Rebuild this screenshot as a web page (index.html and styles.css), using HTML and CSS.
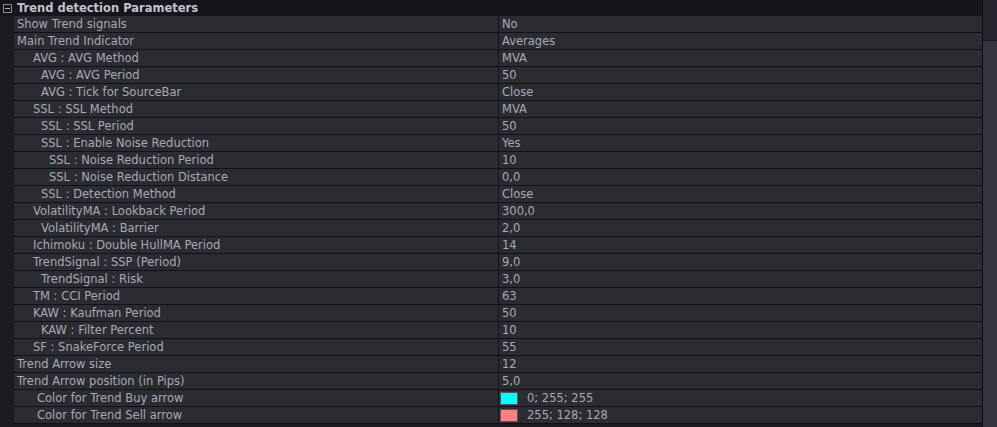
FILE: index.html
```html
<!DOCTYPE html>
<html lang="en">
<head>
  <meta charset="UTF-8">
  <title>Trend detection Parameters</title>
  <link rel="stylesheet" href="styles.css">
</head>
<body>
  <div class="panel">
    <div class="main">
      <div class="header">
        <span class="toggle"></span>
        <span class="title">Trend detection Parameters</span>
      </div>
      <div class="rows">
        <div class="row"><span class="name l0">Show Trend signals</span><span class="value">No</span></div>
        <div class="row"><span class="name l0">Main Trend Indicator</span><span class="value">Averages</span></div>
        <div class="row"><span class="name l1">AVG : AVG Method</span><span class="value">MVA</span></div>
        <div class="row"><span class="name l2">AVG : AVG Period</span><span class="value">50</span></div>
        <div class="row"><span class="name l2">AVG : Tick for SourceBar</span><span class="value">Close</span></div>
        <div class="row"><span class="name l1">SSL : SSL Method</span><span class="value">MVA</span></div>
        <div class="row"><span class="name l2">SSL : SSL Period</span><span class="value">50</span></div>
        <div class="row"><span class="name l2">SSL : Enable Noise Reduction</span><span class="value">Yes</span></div>
        <div class="row"><span class="name l3">SSL : Noise Reduction Period</span><span class="value">10</span></div>
        <div class="row"><span class="name l3">SSL : Noise Reduction Distance</span><span class="value">0,0</span></div>
        <div class="row"><span class="name l2">SSL : Detection Method</span><span class="value">Close</span></div>
        <div class="row"><span class="name l1">VolatilityMA : Lookback Period</span><span class="value">300,0</span></div>
        <div class="row"><span class="name l2">VolatilityMA : Barrier</span><span class="value">2,0</span></div>
        <div class="row"><span class="name l1">Ichimoku : Double HullMA Period</span><span class="value">14</span></div>
        <div class="row"><span class="name l1">TrendSignal : SSP (Period)</span><span class="value">9,0</span></div>
        <div class="row"><span class="name l2">TrendSignal : Risk</span><span class="value">3,0</span></div>
        <div class="row"><span class="name l1">TM : CCI Period</span><span class="value">63</span></div>
        <div class="row"><span class="name l1">KAW : Kaufman Period</span><span class="value">50</span></div>
        <div class="row"><span class="name l2">KAW : Filter Percent</span><span class="value">10</span></div>
        <div class="row"><span class="name l1">SF : SnakeForce Period</span><span class="value">55</span></div>
        <div class="row"><span class="name l0">Trend Arrow size</span><span class="value">12</span></div>
        <div class="row"><span class="name l0">Trend Arrow position (in Pips)</span><span class="value">5,0</span></div>
        <div class="row"><span class="name lc">Color for Trend Buy arrow</span><span class="value color"><i class="swatch" style="background:rgb(0,255,255)"></i>0; 255; 255</span></div>
        <div class="row"><span class="name lc">Color for Trend Sell arrow</span><span class="value color"><i class="swatch" style="background:rgb(255,128,128)"></i>255; 128; 128</span></div>
      </div>
    </div>
    <div class="scrollbar">
      <div class="track"></div>
      <div class="thumb"></div>
    </div>
  </div>
</body>
</html>
```

FILE: styles.css
```css
html, body {
  margin: 0;
  height: 100%;
  background-color: #17171d;
}
body {
  font-family: "DejaVu Sans", Verdana, sans-serif;
  font-size: 11.5px;
  color: #a9a9b5;
  overflow: hidden;
}
.panel {
  display: flex;
  height: 427px;
}
.main {
  width: 982px;
  background-color: #1b1b21;
}
.header {
  height: 16px;
  display: flex;
  align-items: center;
  background-color: #15151b;
}
.toggle {
  width: 9px;
  height: 9px;
  margin-left: 3px;
  margin-right: 5px;
  border: 1px solid #8a8a96;
  box-sizing: border-box;
  position: relative;
}
.toggle::after {
  content: "";
  position: absolute;
  left: 1px;
  right: 1px;
  top: 3px;
  height: 1px;
  background-color: #b0b0bc;
}
.title {
  font-weight: bold;
  font-size: 11.5px;
  color: #c3c3cd;
}
.rows {
  padding-left: 14px;
}
.row {
  display: grid;
  grid-template-columns: 485px 1fr;
  height: 16px;
  border-bottom: 1px solid #121216;
  background-color: #2b2c32;
  line-height: 17px;
}
.name {
  border-right: 1px solid #141418;
  white-space: nowrap;
  overflow: hidden;
}
.l0 { padding-left: 3px; }
.l1 { padding-left: 19px; }
.l2 { padding-left: 27px; }
.l3 { padding-left: 35px; }
.lc { padding-left: 23px; }
.value {
  padding-left: 3px;
  white-space: nowrap;
}
.value.color {
  display: flex;
  align-items: center;
  padding-left: 1px;
}
.swatch {
  width: 18px;
  height: 13px;
  margin-right: 9px;
  border: 1px solid #555560;
  box-sizing: border-box;
}
.scrollbar {
  width: 15px;
  display: flex;
  flex-direction: column;
  border-left: 1px solid #0e0e12;
  box-sizing: border-box;
}
.track {
  height: 40px;
  background-color: #25252d;
  border-bottom: 1px solid #17171d;
}
.thumb {
  flex: 1;
  background-color: #35353f;
}
```
